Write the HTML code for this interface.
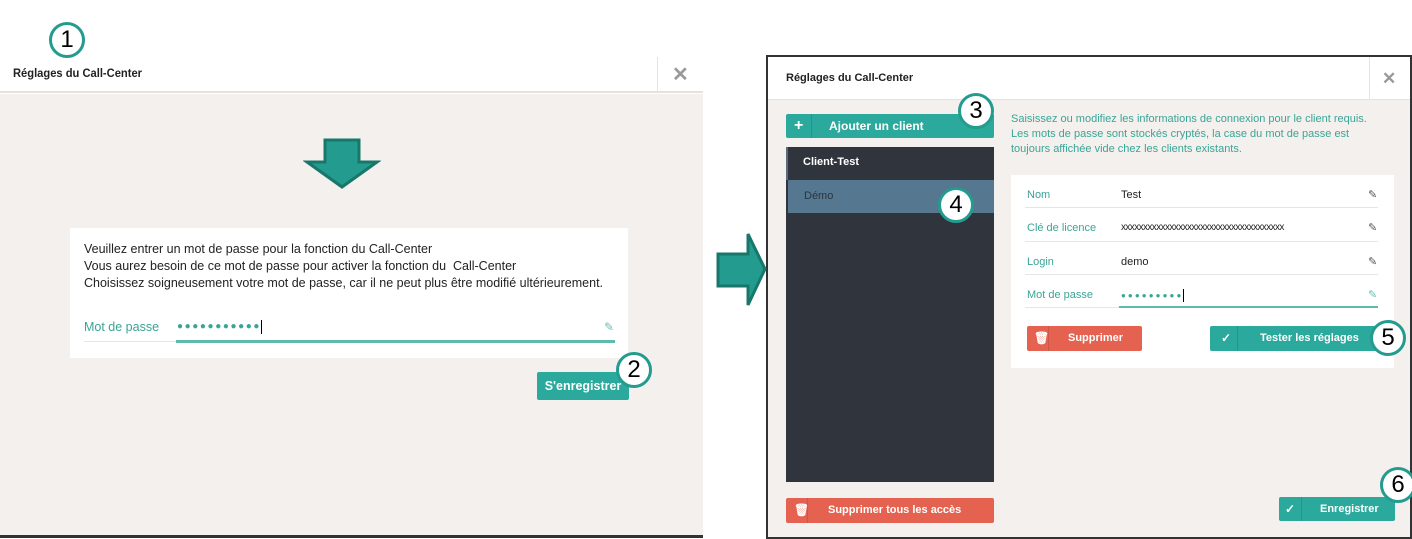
<!DOCTYPE html>
<html><head><meta charset="utf-8"><style>
*{margin:0;padding:0;box-sizing:border-box}
body{width:1412px;height:539px;background:#fff;position:relative;overflow:hidden;font-family:"Liberation Sans",sans-serif;font-size:12px;color:#222}
.a{position:absolute}
.circ{position:absolute;width:36px;height:36px;border:3px solid #239b8e;border-radius:50%;background:#fff;font-size:24px;line-height:30px;text-align:center;color:#000;font-family:"Liberation Sans",sans-serif;font-weight:normal}
.btn{position:absolute;color:#fff;font-weight:bold;font-size:12px;border-radius:2px}
.teal{background:#2aa99c}.red{background:#e56251}
.lbl{color:#3aa596;font-size:11px}
.ln{position:absolute;height:1px;background:#e6e6e6}
</style></head><body>
<!-- LEFT -->
<div class="a" style="left:0;top:0;width:703px;height:93px;background:#fff;border-bottom:2px solid #e4e2df"></div>
<div class="a" style="left:13px;top:66px;font-size:12px;font-weight:bold;transform:scaleX(.93);transform-origin:left">Réglages du Call-Center</div>
<div class="a" style="left:657px;top:57px;width:1px;height:36px;background:#e4e4e4"></div>
<div class="a" style="left:672px;top:62px;font-size:20px;color:#999;font-weight:bold">✕</div>
<div class="circ" style="left:49px;top:22px">1</div>
<div class="a" style="left:0;top:94px;width:703px;height:441px;background:#f3f0ed"></div>
<div class="a" style="left:0;top:535px;width:703px;height:3px;background:#333"></div>
<svg class="a" style="left:303px;top:138px" width="78" height="52"><polygon points="22,2 56,2 56,24 74,24 39,49 4,24 22,24" fill="#239b8e" stroke="#18776b" stroke-width="3"/></svg>
<div class="a" style="left:70px;top:228px;width:558px;height:130px;background:#fff"></div>
<div class="a" style="left:84px;top:241px;font-size:12.5px;line-height:17px;color:#222">Veuillez entrer un mot de passe pour la fonction du Call-Center<br>Vous aurez besoin de ce mot de passe pour activer la fonction du &nbsp;Call-Center<br>Choisissez soigneusement votre mot de passe, car il ne peut plus être modifié ultérieurement.</div>
<div class="a lbl" style="left:84px;top:320px;font-size:12.5px">Mot de passe</div>
<div class="a" style="left:177px;top:320px;color:#3aa596;font-size:10px;letter-spacing:1.6px;border-right:1px solid #000;line-height:14px">●●●●●●●●●●●</div>
<div class="a" style="left:604px;top:320px;color:#6cc0b5;font-size:12px">✎</div>
<div class="ln" style="left:84px;top:341px;width:92px"></div>
<div class="a" style="left:176px;top:340px;width:439px;height:3px;background:#5fb9ad"></div>
<div class="btn teal" style="left:537px;top:372px;width:92px;height:28px;line-height:28px;text-align:center;font-size:12.5px">S'enregistrer</div>
<div class="circ" style="left:616px;top:352px">2</div>
<!-- RIGHT -->
<div class="a" style="left:766px;top:55px;width:646px;height:484px;border:2px solid #333;background:#f3f0ed"></div>
<svg class="a" style="left:715px;top:231px" width="54" height="78"><polygon points="3,23 33,23 33,3 50,38 33,74 33,55 3,55" fill="#239b8e" stroke="#18776b" stroke-width="3"/></svg>
<div class="a" style="left:768px;top:57px;width:642px;height:43px;background:#fff;border-bottom:1px solid #e4e2df"></div>
<div class="a" style="left:786px;top:72px;font-size:11px;font-weight:bold">Réglages du Call-Center</div>
<div class="a" style="left:1369px;top:57px;width:1px;height:43px;background:#e4e4e4"></div>
<div class="a" style="left:1382px;top:69px;font-size:17px;color:#999;font-weight:bold">✕</div>
<div class="btn teal" style="left:786px;top:114px;width:208px;height:24px;line-height:24px"><span style="position:absolute;left:8px;font-size:16px">+</span><span style="position:absolute;left:25px;top:0;width:1px;height:24px;background:#239488"></span><span style="position:absolute;left:43px">Ajouter un client</span></div>
<div class="circ" style="left:958px;top:93px">3</div>
<div class="a" style="left:786px;top:147px;width:208px;height:335px;background:#30343c"></div>
<div class="a" style="left:786px;top:147px;width:2px;height:33px;background:#5a6b7c"></div>
<div class="a" style="left:803px;top:156px;color:#fff;font-weight:bold;font-size:11px">Client-Test</div>
<div class="a" style="left:788px;top:180px;width:206px;height:33px;background:#557790"></div>
<div class="a" style="left:804px;top:190px;color:#2a3540;font-size:11px">Démo</div>
<div class="circ" style="left:938px;top:187px">4</div>
<div class="btn red" style="left:786px;top:498px;width:208px;height:25px;line-height:25px"><span style="position:absolute;left:8px">🗑</span><span style="position:absolute;left:21px;top:0;width:1px;height:25px;background:#cf5545"></span><span style="position:absolute;left:42px;font-size:11px">Supprimer tous les accès</span></div>
<div class="a" style="left:1011px;top:112px;color:#3aa596;font-size:11px;line-height:15px">Saisissez ou modifiez les informations de connexion pour le client requis.<br>Les mots de passe sont stockés cryptés, la case du mot de passe est<br>toujours affichée vide chez les clients existants.</div>
<div class="a" style="left:1011px;top:175px;width:383px;height:193px;background:#fff"></div>
<div class="a lbl" style="left:1027px;top:189px">Nom</div><div class="a" style="left:1121px;top:189px;font-size:11px">Test</div><div class="a" style="left:1368px;top:188px;color:#555;font-size:11px">✎</div>
<div class="ln" style="left:1025px;top:207px;width:353px"></div>
<div class="a lbl" style="left:1027px;top:222px">Clé de licence</div><div class="a" style="left:1121px;top:222px;font-size:10px;letter-spacing:-0.6px">xxxxxxxxxxxxxxxxxxxxxxxxxxxxxxxxxxxxx</div><div class="a" style="left:1368px;top:221px;color:#555;font-size:11px">✎</div>
<div class="ln" style="left:1025px;top:241px;width:353px"></div>
<div class="a lbl" style="left:1027px;top:256px">Login</div><div class="a" style="left:1121px;top:256px;font-size:11px">demo</div><div class="a" style="left:1368px;top:255px;color:#555;font-size:11px">✎</div>
<div class="ln" style="left:1025px;top:274px;width:353px"></div>
<div class="a lbl" style="left:1027px;top:289px">Mot de passe</div><div class="a" style="left:1121px;top:289px;color:#3aa596;font-size:8px;letter-spacing:2.1px;border-right:1px solid #000;line-height:13px">●●●●●●●●●</div><div class="a" style="left:1368px;top:288px;color:#6cc0b5;font-size:11px">✎</div>
<div class="ln" style="left:1025px;top:307px;width:94px"></div>
<div class="a" style="left:1119px;top:306px;width:259px;height:2px;background:#5fb9ad"></div>
<div class="btn red" style="left:1027px;top:326px;width:115px;height:25px;line-height:25px"><span style="position:absolute;left:7px">🗑</span><span style="position:absolute;left:21px;top:0;width:1px;height:25px;background:#cf5545"></span><span style="position:absolute;left:41px;font-size:11px">Supprimer</span></div>
<div class="btn teal" style="left:1210px;top:326px;width:168px;height:25px;line-height:25px"><span style="position:absolute;left:11px">✓</span><span style="position:absolute;left:27px;top:0;width:1px;height:25px;background:#239488"></span><span style="position:absolute;left:50px;font-size:11px">Tester les réglages</span></div>
<div class="circ" style="left:1370px;top:320px">5</div>
<div class="btn teal" style="left:1279px;top:497px;width:116px;height:24px;line-height:24px"><span style="position:absolute;left:6px">✓</span><span style="position:absolute;left:22px;top:0;width:1px;height:24px;background:#239488"></span><span style="position:absolute;left:41px;font-size:11px">Enregistrer</span></div>
<div class="circ" style="left:1380px;top:467px">6</div>
</body></html>
